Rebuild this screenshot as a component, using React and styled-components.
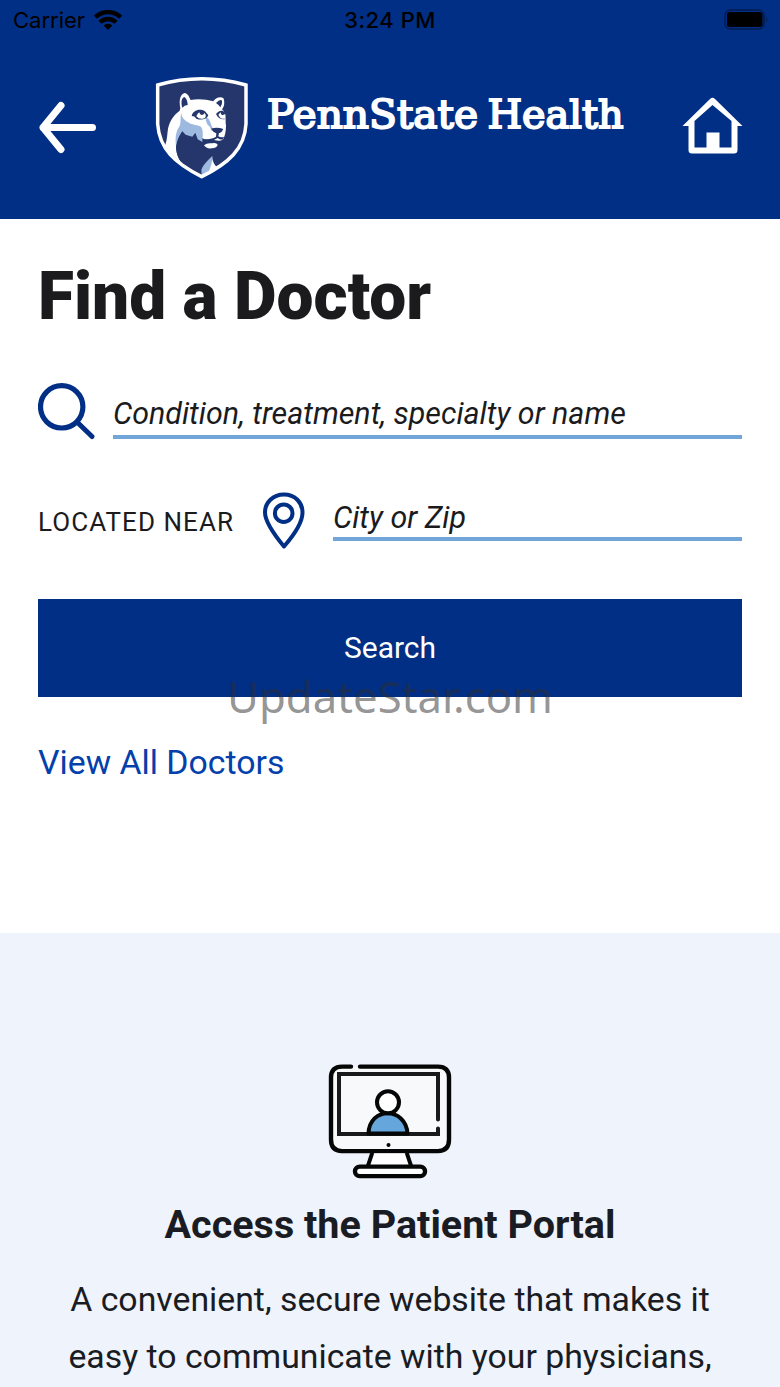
import React from "react";
import styled, { createGlobalStyle } from "styled-components";

const GlobalStyle = createGlobalStyle`
  * { box-sizing: border-box; }
  body { margin: 0; background: #fff; }
`;

const Screen = styled.div`
  position: relative;
  width: 780px;
  height: 1387px;
  overflow: hidden;
  display: flex;
  flex-direction: column;
  background: #fff;
  color: #1b1b1d;
  font-family: Roboto, "Liberation Sans", sans-serif;
`;

const Header = styled.header`
  height: 219px;
  flex: none;
  background: #002f85;
`;

const StatusBar = styled.div`
  height: 40px;
  padding: 0 11px 0 13px;
  display: grid;
  grid-template-columns: 1fr auto 1fr;
  align-items: center;
  color: #000;
  font-family: Inter, "Liberation Sans", sans-serif;
  font-size: 22px;
  line-height: 40px;
`;

const Carrier = styled.div`
  display: flex;
  align-items: center;
  gap: 9px;
  letter-spacing: 0;
`;

const Clock = styled.div`
  font-weight: 500;
  letter-spacing: 0.5px;
  transform: translateX(-1px);
`;

const BatterySlot = styled.div`
  display: flex;
  justify-content: flex-end;
`;

const NavBar = styled.nav`
  height: 179px;
  padding: 37px 37px 0 39px;
  display: flex;
  align-items: flex-start;
`;

const BackIcon = styled.svg`
  margin: 24px 58px 0 0;
  flex: none;
`;

const Brand = styled.div`
  display: flex;
  align-items: flex-start;
  flex: 1;
  gap: 16px;
`;

const Wordmark = styled.svg`
  margin-top: 9px;
  flex: none;
`;

const HomeIcon = styled.svg`
  margin-top: 20px;
  flex: none;
`;

const Finder = styled.main`
  height: 714px;
  flex: none;
  padding: 40px 38px 0;
`;

const Title = styled.h1`
  margin: 0;
  font-size: 65.8px;
  line-height: 75px;
  font-weight: 900;
`;

const FieldRow = styled.div`
  display: flex;
  align-items: flex-start;
  margin-top: ${(p) => p.$top}px;
  height: ${(p) => p.$height}px;
`;

const Field = styled.div`
  flex: 1;
  margin-left: ${(p) => p.$left}px;
  height: ${(p) => p.$height}px;
  border-bottom: 4px solid #72a6da;
  font-size: 30.4px;
  line-height: ${(p) => p.$line}px;
  font-style: italic;
  white-space: nowrap;
`;

const FieldLabel = styled.span`
  width: 225px;
  font-size: 26px;
  line-height: 62px;
  letter-spacing: 1.05px;
  white-space: nowrap;
`;

const SearchButton = styled.button`
  display: block;
  width: 100%;
  height: 98px;
  margin-top: 50px;
  padding: 0 0 1px;
  border: 0;
  background: #002f85;
  color: #fff;
  font: 400 30px/96px Roboto, sans-serif;
`;

const DoctorsLink = styled.a`
  display: inline-block;
  margin-top: 46px;
  color: #0340ac;
  font-size: 33.8px;
  line-height: 40px;
`;

const Portal = styled.section`
  flex: 1;
  padding-top: 130px;
  background: #eff3fc;
  color: #191c22;
  display: flex;
  flex-direction: column;
  align-items: center;
  text-align: center;
`;

const PortalTitle = styled.h2`
  margin: 23px 0 0;
  font-size: 39.5px;
  line-height: 46px;
  font-weight: 700;
  white-space: nowrap;
`;

const PortalText = styled.p`
  margin: 23px 0 0;
  font-size: 33.8px;
  line-height: 57px;
  white-space: nowrap;
`;

const Watermark = styled.div`
  position: absolute;
  left: 0;
  right: 0;
  top: 666px;
  text-align: center;
  font-family: "Noto Sans", sans-serif;
  font-size: 43.7px;
  line-height: 60px;
  color: rgba(45, 45, 45, 0.52);
  pointer-events: none;
`;

function Wifi() {
  return (
    <svg width="28" height="20" viewBox="0 0 28 20">
      <g fill="none" stroke="#000" strokeWidth="4.4">
        <path d="M1.5 7.2a17.7 17.7 0 0 1 25 0" />
        <path d="M6 12.3a11.4 11.4 0 0 1 16 0" />
      </g>
      <path d="M14 20l-4.4-4.4a6.2 6.2 0 0 1 8.8 0z" />
    </svg>
  );
}

function Battery() {
  return (
    <svg width="45" height="22" viewBox="0 0 45 22">
      <rect x="1" y="1" width="39" height="19" rx="5.5" fill="none" stroke="#001f5b" strokeWidth="2" />
      <rect x="3" y="3" width="35.5" height="15" rx="3" />
      <path d="M42 7.5q2.5 3 0 6z" fill="#001f5b" />
    </svg>
  );
}

function Shield() {
  return (
    <svg width="95" height="103" viewBox="30 21 285 309">
      <path d="M38 45Q170 8 303 45V162C299 237 250 280 170 320C90 280 43 237 38 162Z" fill="#24366c" />
      <path d="M106 114C101 92 106 70 120 69C130 72 133 82 137 90C158 86 184 88 205 94C212 84 224 79 235 84C240 96 238 110 231 118C237 124 241 130 241 140C243 150 241 156 243 166C243 184 240 198 235 207C230 214 214 214 202 208C190 210 178 210 172 204L150 188L112 180C100 200 91 220 94 240C97 262 106 276 120 290L58 232C66 214 66 200 68 184C70 160 84 136 104 122Z" fill="#fff" />
      <path d="M112 113C107 97 110 83 118 81C126 86 128 98 128 105Q118 105 112 113Z" fill="#24366c" />
      <path d="M213 99Q226 85 231 92Q233 104 226 112Q220 103 213 99Z" fill="#24366c" />
      <path d="M112 184C100 198 91 220 94 240C97 262 106 276 120 286L168 312C170 290 180 274 201 256L236 214L200 214L172 215L150 188Z" fill="#24366c" />
      <path d="M108 128C106 146 108 158 104 168C96 180 89 196 93 228C98 206 104 194 112 184L122 194L142 200L151 188L158 208L172 216C173 200 176 180 168 170C156 164 140 164 132 158C118 152 110 142 108 128Z" fill="#9db9df" />
      <path d="M182 140C192 144 196 154 200 168L208 182L200 182L194 170C184 162 182 152 182 140Z" fill="#9db9df" />
      <path d="M140 138C144 122 162 114 180 124L190 136C186 148 168 152 154 146C150 140 146 138 140 138Z" fill="#24366c" />
      <path d="M154 139Q157 130 163 127Q164 135 170 135Q176 135 179 129Q186 138 179 144Q164 151 154 139Z" fill="#fff" />
      <path d="M213 132C220 122 232 118 240 128L241 147C230 150 220 146 213 132Z" fill="#24366c" />
      <path d="M220 134L227 127Q227 135 232 136L241 132V146Q226 149 220 134Z" fill="#fff" />
      <path d="M198 176Q216 170 235 177Q232 186 222 190L220 199Q228 204 237 200L234 208Q226 210 218 204Q208 212 190 214Q180 214 178 208Q200 208 213 200L214 190Q204 186 198 176Z" fill="#24366c" />
      <path d="M177 226Q186 218 200 220Q214 216 218 224Q216 234 200 235Q184 237 177 226Z" fill="#fff" />
      <path d="M170 316L169 300C174 284 190 270 202 258Q202 276 216 296Z" fill="#9db9df" />
      <path d="M202 258C200 272 206 282 216 292L190 308C198 290 202 276 202 258Z" fill="#fff" />
      <path d="M38 45Q170 8 303 45V162C299 237 250 280 170 320C90 280 43 237 38 162Z" fill="none" stroke="#fff" strokeWidth="10.5" />
    </svg>
  );
}

function Monitor() {
  return (
    <svg width="124" height="116" viewBox="0 -0.6 124 116" fill="none" stroke="#050707" strokeWidth="4.4" strokeLinecap="round" strokeLinejoin="round">
      <path d="M14 3H110Q121 3 121 14V76Q121 87.500 110 87.500H14Q3 87.500 3 76V14Q3 3 14 3Z" fill="#f8f9fb" stroke="none" />
      <path d="M23 3H14Q3 3 3 14V76Q3 87.500 14 87.500H110Q121 87.500 121 76V14Q121 3 110 3H32" />
      <path d="M110 56V10.500H11V70.500H110V65" stroke="#181a1b" strokeWidth="4" strokeLinejoin="miter" />
      <path d="M40.500 70C41 43 78 43 79.500 70Z" fill="#65a7dd" strokeWidth="4" />
      <circle cx="60" cy="38.700" r="11" fill="#fff" strokeWidth="4" />
      <circle cx="60.500" cy="81.500" r="2" fill="#050707" stroke="none" />
      <path d="M44 90L40 102H83L79 90" fill="#fff" stroke="none" />
      <path d="M44 90L40 102M79 90L83 102" strokeWidth="4" />
      <rect x="27" y="103" width="70" height="9.500" rx="4.700" fill="#fff" />
    </svg>
  );
}

export default function App() {
  return (
    <Screen>
      <GlobalStyle />
      <Header>
        <StatusBar>
          <Carrier>Carrier <Wifi /></Carrier>
          <Clock>3:24 PM</Clock>
          <BatterySlot><Battery /></BatterySlot>
        </StatusBar>
        <NavBar>
          <BackIcon width="58" height="53" viewBox="0 0 58 53" fill="none" stroke="#fff" strokeWidth="7" strokeLinecap="round" strokeLinejoin="round">
            <path d="M22 4.500L4 26.500L22 48.500M4 26.500H53.500" />
          </BackIcon>
          <Brand>
            <Shield />
            <Wordmark width="370" height="60" viewBox="0 0 370 60" fill="#fff" stroke="#fff" strokeWidth="1.9" fontFamily="DejaVu Serif, serif" fontSize="38.500">
              <text x="1" y="42.300" textLength="211" lengthAdjust="spacingAndGlyphs">PennState</text>
              <text x="221.500" y="42.300" textLength="136" lengthAdjust="spacingAndGlyphs">Health</text>
            </Wordmark>
          </Brand>
          <HomeIcon width="61" height="57" viewBox="0 -0.500 61 57" fill="#fff">
            <path fillRule="evenodd" d="M28 1.500Q30.500 -.8 33 1.500L60.500 28.500H55.500V52.500Q55.500 56 52 56H10Q6.500 56 6.500 52.500V28.500H.5ZM12.500 23.500V50H24.500V35H37.500V50H49.500V23.500L30.500 7.500Z" />
          </HomeIcon>
        </NavBar>
      </Header>
      <Finder>
        <Title>Find a Doctor</Title>
        <FieldRow $top={48} $height={58}>
          <svg width="58" height="58" viewBox="0 0 58 58" fill="none" stroke="#002f85" strokeLinecap="round">
            <circle cx="23.700" cy="24.800" r="21.200" strokeWidth="5.200" />
            <path d="M39 40L54 54.500" strokeWidth="5" />
          </svg>
          <Field $left={17} $height={57} $line={63}>Condition, treatment, specialty or name</Field>
        </FieldRow>
        <FieldRow $top={51} $height={58}>
          <FieldLabel>LOCATED NEAR</FieldLabel>
          <svg width="43" height="58" viewBox="0 0 43 58" fill="none" stroke="#002f85" strokeWidth="4" strokeLinejoin="round">
            <path d="M21 3.500C10 3.500 2 11.500 2 21.500C2 30.500 11.500 44 21 55.500C31 44 39.500 30.500 39.500 21.500C39.500 11.500 32 3.500 21 3.500Z" />
            <circle cx="20.700" cy="22.200" r="8.800" />
          </svg>
          <Field $left={27} $height={50} $line={54}>City or Zip</Field>
        </FieldRow>
        <SearchButton>Search</SearchButton>
        <DoctorsLink>View All Doctors</DoctorsLink>
      </Finder>
      <Portal>
        <Monitor />
        <PortalTitle>Access the Patient Portal</PortalTitle>
        <PortalText>
          A convenient, secure website that makes it
          <br />
          easy to communicate with your physicians,
        </PortalText>
      </Portal>
      <Watermark>UpdateStar.com</Watermark>
    </Screen>
  );
}
